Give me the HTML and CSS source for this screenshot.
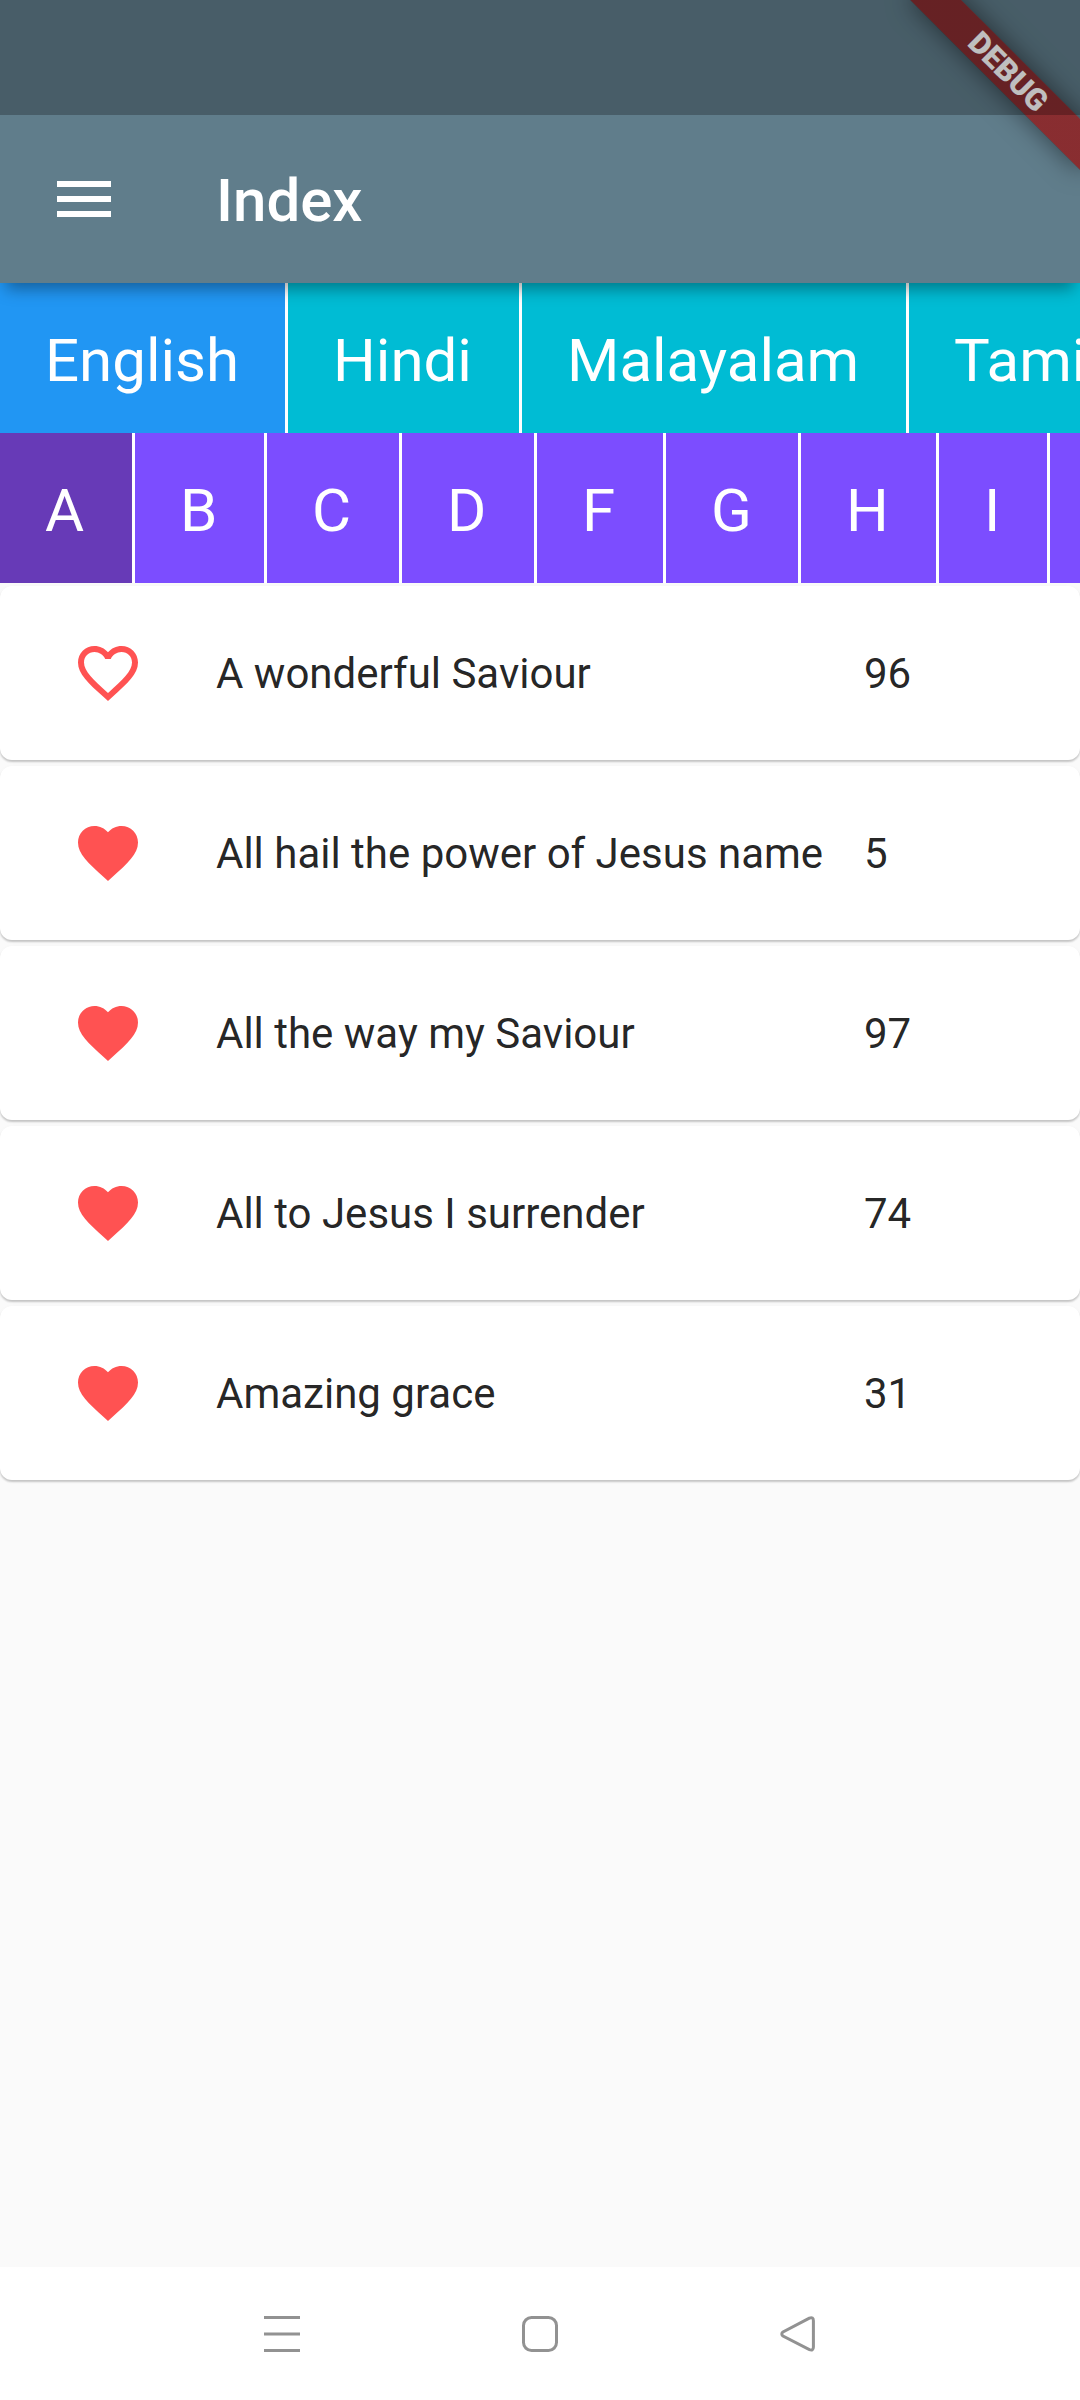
FILE: index.html
```html
<!DOCTYPE html>
<html lang="en">
  <head>
    <meta charset="UTF-8" />
    <meta name="viewport" content="width=device-width, initial-scale=1.0" />
    <title>Index</title>

    <!-- custom style -->
    <link rel="stylesheet" href="styles.css" />
  </head>
  <body>
    <!-- shared icons -->
    <svg class="sprite" aria-hidden="true">
      <symbol id="heart" viewBox="0 0 24 24">
        <path
          d="M12 21.35l-1.45-1.32C5.4 15.36 2 12.28 2 8.5 2 5.42 4.42 3 7.5 3c1.74 0 3.41.81 4.5 2.09C13.09 3.81 14.76 3 16.5 3 19.58 3 22 5.42 22 8.5c0 3.78-3.4 6.86-8.55 11.54L12 21.35z"
        />
      </symbol>
      <symbol id="heart-outline" viewBox="0 0 24 24">
        <path
          d="M16.5 3c-1.74 0-3.41.81-4.5 2.09C10.91 3.81 9.24 3 7.5 3 4.42 3 2 5.42 2 8.5c0 3.78 3.4 6.86 8.55 11.54L12 21.35l1.45-1.32C18.6 15.36 22 12.28 22 8.5 22 5.42 19.58 3 16.5 3zm-4.4 15.55l-.1.1-.1-.1C7.14 14.24 4 11.39 4 8.5 4 6.5 5.5 5 7.5 5c1.54 0 3.04.99 3.57 2.36h1.87C13.46 5.99 14.96 5 16.5 5c2 0 3.5 1.5 3.5 3.5 0 2.89-3.14 5.74-7.9 10.05z"
        />
      </symbol>
    </svg>

    <div class="app">
      <!-- app bar -->
      <header class="app-bar">
        <button class="menu-btn" type="button" aria-label="Menu">
          <svg viewBox="0 0 24 24">
            <path d="M3 18h18v-2H3v2zm0-5h18v-2H3v2zm0-7v2h18V6H3z" />
          </svg>
        </button>
        <h1 class="title">Index</h1>
      </header>

      <!-- languages -->
      <nav class="tabs languages">
        <a class="tab english active">English</a>
        <a class="tab hindi">Hindi</a>
        <a class="tab malayalam">Malayalam</a>
        <a class="tab tamil">Tamil</a>
      </nav>

      <!-- letters -->
      <nav class="tabs letters">
        <a class="tab active">A</a>
        <a class="tab narrow">B</a>
        <a class="tab">C</a>
        <a class="tab">D</a>
        <a class="tab narrower">F</a>
        <a class="tab">G</a>
        <a class="tab wide">H</a>
        <a class="tab thin">I</a>
        <a class="tab"></a>
      </nav>

      <!-- songs -->
      <main class="songs">
        <article class="song">
          <svg class="heart"><use href="#heart-outline" /></svg>
          <p class="song-title">A wonderful Saviour</p>
          <p class="song-number">96</p>
        </article>
        <article class="song">
          <svg class="heart"><use href="#heart" /></svg>
          <p class="song-title">All hail the power of Jesus name</p>
          <p class="song-number">5</p>
        </article>
        <article class="song">
          <svg class="heart"><use href="#heart" /></svg>
          <p class="song-title">All the way my Saviour</p>
          <p class="song-number">97</p>
        </article>
        <article class="song">
          <svg class="heart"><use href="#heart" /></svg>
          <p class="song-title">All to Jesus I surrender</p>
          <p class="song-number">74</p>
        </article>
        <article class="song">
          <svg class="heart"><use href="#heart" /></svg>
          <p class="song-title">Amazing grace</p>
          <p class="song-number">31</p>
        </article>
      </main>

      <!-- system navigation -->
      <footer class="system-nav">
        <svg viewBox="0 0 36 36">
          <path d="M0 1.5h36M0 18h36M0 34.5h36" />
        </svg>
        <svg viewBox="0 0 36 36">
          <rect x="1.5" y="1.5" width="33" height="33" rx="8" />
        </svg>
        <svg viewBox="0 0 36 36">
          <path
            d="M29.4 2.1 L3 15.9 Q0.6 18 3 20.1 L29.4 33.6 Q33.4 35 33.4 31 V4.7 Q33.4 0.7 29.4 2.1Z"
          />
        </svg>
      </footer>

      <!-- ribbon and status bar, over everything -->
      <div class="debug-banner">DEBUG</div>
      <div class="status-bar"></div>
    </div>
  </body>
</html>
```

FILE: styles.css
```css
/* resets */
* {
  padding: 0;
  margin: 0;
  box-sizing: border-box;
}
body {
  font-family: Roboto, sans-serif;
  color: rgba(0, 0, 0, 0.87);
  background-color: #fafafa;
}

.sprite {
  display: none;
}

.app {
  position: relative;
  display: flex;
  flex-direction: column;
  width: 1080px;
  height: 2400px;
  overflow: hidden;
}

/* app bar */
.app-bar {
  position: relative;
  z-index: 1;
  display: flex;
  align-items: center;
  height: 283px;
  padding: 115px 48px 0;
  background-color: #607d8b;
  color: #fff;
  box-shadow: 0 12px 15px -6px rgba(0, 0, 0, 0.36);
}
.menu-btn {
  width: 72px;
  height: 72px;
  margin-right: 96px;
  border: none;
  background: none;
  cursor: pointer;
}
.menu-btn svg {
  display: block;
  fill: #fff;
}
.title {
  padding-top: 2px;
  font-size: 60px;
  font-weight: 500;
}

/* tabs */
.tabs {
  display: flex;
  height: 150px;
}
.tab {
  flex: none;
  width: 135px;
  padding-left: 45px;
  border-right: 3px solid #fff;
  color: #fff;
  font-size: 60px;
  line-height: 156px;
}

.languages .tab {
  background-color: #00bcd4;
}
.languages .active {
  background-color: #2196f3;
}
.languages .english {
  width: 288px;
}
.languages .hindi {
  width: 234px;
}
.languages .malayalam {
  width: 387px;
}
.languages .tamil {
  width: 240px;
}

.letters .tab {
  background-color: #7c4dff;
}
.letters .active {
  background-color: #673ab7;
}
.letters .wide {
  width: 138px;
}
.letters .narrow {
  width: 132px;
}
.letters .narrower {
  width: 129px;
}
.letters .thin {
  width: 111px;
}

/* songs */
.songs {
  flex: 1;
}
.song {
  display: grid;
  grid-template-columns: 1fr 3fr 1fr;
  align-items: center;
  height: 174px;
  margin: 3px 0 6px;
  border-radius: 12px;
  background-color: #fff;
  font-size: 42px;
  box-shadow: 0 2px 2px rgba(0, 0, 0, 0.2), 0 1px 4px rgba(0, 0, 0, 0.03);
}
.heart {
  justify-self: center;
  width: 72px;
  height: 72px;
  fill: #ff5252;
}
.song-title {
  white-space: nowrap;
}

/* system navigation */
.system-nav {
  display: grid;
  grid-template-columns: repeat(3, 1fr);
  place-items: center;
  height: 133px;
  padding: 0 153px;
  background-color: #fff;
}
.system-nav svg {
  width: 36px;
  height: 36px;
  fill: none;
  stroke: #929292;
  stroke-width: 3;
}

/* overlays */
.debug-banner {
  position: absolute;
  z-index: 2;
  top: 84px;
  right: -120px;
  width: 240px;
  height: 36px;
  /* red over its own shadow */
  background: linear-gradient(rgba(183, 28, 28, 0.63), rgba(183, 28, 28, 0.63))
    rgba(0, 0, 0, 0.4);
  color: #fff;
  font-size: 30.6px;
  font-weight: 900;
  line-height: 36px;
  text-align: center;
  transform: rotate(45deg);
  transform-origin: 120px -84px;
  box-shadow: 0 0 26px rgba(0, 0, 0, 0.5);
}
.status-bar {
  position: absolute;
  z-index: 3;
  top: 0;
  left: 0;
  width: 100%;
  height: 115px;
  background-color: rgba(0, 0, 0, 0.25);
}
```
